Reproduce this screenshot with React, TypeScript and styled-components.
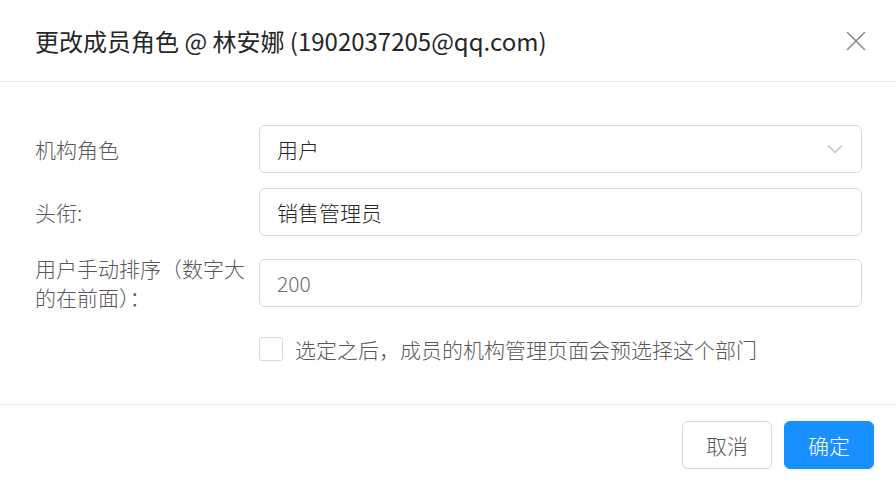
import React from 'react';
import styled, { createGlobalStyle } from 'styled-components';

const GlobalStyle = createGlobalStyle`
  html, body {
    margin: 0;
    padding: 0;
    background: #ffffff;
  }
  body {
    font-family: "Noto Sans CJK SC", "Noto Sans", sans-serif;
    font-weight: 300;
  }
  * {
    box-sizing: border-box;
  }
`;

// Modal shell
const Modal = styled.div`
  width: 896px;
  height: 483px;
  display: flex;
  flex-direction: column;
  background: #ffffff;
`;

const Header = styled.div`
  height: 82px;
  padding: 0 30px 0 35px;
  display: flex;
  align-items: center;
  justify-content: space-between;
  border-bottom: 1px solid #e8e8e8;
`;

const Title = styled.div`
  font-size: 24px;
  font-weight: 400;
  line-height: 33px;
  color: #262626;
  white-space: nowrap;
`;

const CloseButton = styled.button`
  width: 20px;
  height: 20px;
  padding: 0;
  border: none;
  background: transparent;
  display: flex;
  align-items: center;
  justify-content: center;
  cursor: pointer;
`;

const Body = styled.div`
  flex: 1;
  padding: 43px 34px 0 35px;
  display: flex;
  flex-direction: column;
`;

interface RowProps {
  $gap: number;
}

const FormRow = styled.div<RowProps>`
  display: flex;
  align-items: center;
  margin-bottom: ${props => props.$gap}px;
`;

const Label = styled.div`
  width: 224px;
  flex-shrink: 0;
  font-size: 21px;
  line-height: 29px;
  color: #595959;
`;

const Field = styled.div`
  flex: 1;
  height: 48px;
  padding: 0 18px 0 17px;
  display: flex;
  align-items: center;
  justify-content: space-between;
  border: 1px solid #d9d9d9;
  border-radius: 6px;
  background: #ffffff;
`;

interface ValueProps {
  $muted?: boolean;
}

const Value = styled.span<ValueProps>`
  font-size: 21px;
  line-height: 30px;
  color: ${props => (props.$muted ? '#6e6e6e' : '#262626')};
`;

const CheckRow = styled.label`
  margin-left: 224px;
  display: flex;
  align-items: center;
  gap: 12px;
  cursor: pointer;
`;

const CheckBox = styled.span`
  width: 24px;
  height: 24px;
  border: 1px solid #d9d9d9;
  border-radius: 3px;
  background: #ffffff;
`;

const CheckText = styled.span`
  font-size: 21px;
  line-height: 30px;
  color: #595959;
`;

const Footer = styled.div`
  height: 79px;
  padding: 16px 22px 0 0;
  display: flex;
  justify-content: flex-end;
  align-items: flex-start;
  gap: 12px;
  border-top: 1px solid #e8e8e8;
`;

interface ButtonProps {
  $primary?: boolean;
}

const Button = styled.button<ButtonProps>`
  width: 90px;
  height: 48px;
  border-radius: 6px;
  font-family: inherit;
  font-weight: inherit;
  font-size: 21px;
  line-height: 30px;
  cursor: pointer;
  border: 1px solid ${props => (props.$primary ? '#1890ff' : '#d9d9d9')};
  background: ${props => (props.$primary ? '#1890ff' : '#ffffff')};
  color: ${props => (props.$primary ? '#ffffff' : '#595959')};
  box-shadow: 0 2px 0 rgba(0, 0, 0, 0.02);
`;

const CloseIcon = () => (
  <svg width="20" height="20" viewBox="0 0 20 20" fill="none">
    <path d="M1.5 1.5 L18.5 18.5 M18.5 1.5 L1.5 18.5" stroke="#8c8c8c" strokeWidth="1.6" strokeLinecap="round" />
  </svg>
);

const ChevronDown = () => (
  <svg width="16" height="10" viewBox="0 0 16 10" fill="none">
    <path d="M1 1.5 L8 8.5 L15 1.5" stroke="#bfbfbf" strokeWidth="1.3" strokeLinejoin="round" />
  </svg>
);

export default function App() {
  return (
    <>
      <GlobalStyle />
      <Modal>
        <Header>
          <Title>更改成员角色 @ 林安娜 (1902037205@qq.com)</Title>
          <CloseButton aria-label="关闭">
            <CloseIcon />
          </CloseButton>
        </Header>
        <Body>
          <FormRow $gap={15}>
            <Label>机构角色</Label>
            <Field>
              <Value>用户</Value>
              <ChevronDown />
            </Field>
          </FormRow>
          <FormRow $gap={18}>
            <Label>头衔:</Label>
            <Field>
              <Value>销售管理员</Value>
            </Field>
          </FormRow>
          <FormRow $gap={22}>
            <Label>
              用户手动排序（数字大
              <br />
              的在前面）：
            </Label>
            <Field>
              <Value $muted>200</Value>
            </Field>
          </FormRow>
          <CheckRow>
            <CheckBox />
            <CheckText>选定之后，成员的机构管理页面会预选择这个部门</CheckText>
          </CheckRow>
        </Body>
        <Footer>
          <Button>取消</Button>
          <Button $primary>确定</Button>
        </Footer>
      </Modal>
    </>
  );
}
